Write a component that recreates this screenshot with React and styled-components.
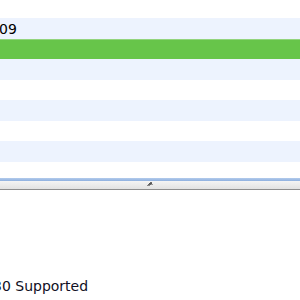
import React from 'react';
import styled, { createGlobalStyle } from 'styled-components';

// --- Colours ---
const STRIPE = '#edf3fe';
const SELECTED = '#67c54a';
const SELECTED_EDGE = '#93d47d';
const TEXT = '#000000';

const GlobalStyle = createGlobalStyle`
  html, body {
    margin: 0;
    padding: 0;
    background: #ffffff;
  }
  body {
    font-family: "DejaVu Sans", "Liberation Sans", sans-serif;
    overflow: hidden;
  }
`;

const Page = styled.div`
  width: 300px;
  height: 300px;
  display: flex;
  flex-direction: column;
  overflow: hidden;
`;

const Table = styled.div`
  padding-top: 18px;
  display: flex;
  flex-direction: column;
  height: 160px;
  overflow: hidden;
`;

const Row = styled.div`
  height: ${p => (p.$selected ? '19.5px' : '20.5px')};
  flex: none;
  display: flex;
  align-items: center;
  background: ${p => (p.$selected ? SELECTED : p.$striped ? STRIPE : '#ffffff')};
  border-top: ${p => (p.$selected ? `1px solid ${SELECTED_EDGE}` : 'none')};
  font-size: 14px;
  color: ${TEXT};
  overflow: hidden;
  white-space: nowrap;
`;

const Cell = styled.span`
  text-indent: -1px;
  padding-top: 2px;
`;

const Splitter = styled.div`
  flex: none;
  height: 12px;
  display: flex;
  flex-direction: column;
`;

const SplitterEdge = styled.div`
  height: 3px;
  background: linear-gradient(#b3cbec, #8eb0df);
`;

const SplitterBody = styled.div`
  height: 8px;
  background: linear-gradient(#f4f4f4, #e2e2e2);
  border-bottom: 1px solid #8e8e8e;
  display: flex;
  justify-content: center;
  align-items: center;
`;

const Status = styled.div`
  margin-top: auto;
  height: 22px;
  font-size: 14px;
  color: #101024;
  text-indent: -7px;
  white-space: nowrap;
  overflow: hidden;
`;

const Grip = () => (
  <svg width="7" height="6" viewBox="0 0 7 6">
    <rect x="3" y="0" width="2" height="1" fill="#6a6a6a" />
    <rect x="2" y="1" width="3" height="1" fill="#555" />
    <rect x="1" y="2" width="3" height="1" fill="#666" />
    <rect x="0" y="3" width="3" height="1" fill="#888" />
    <rect x="4" y="2" width="2" height="1" fill="#999" />
  </svg>
);

const rows = [
  { text: '09', striped: true },
  { text: '', selected: true },
  { text: '', striped: true },
  { text: '' },
  { text: '', striped: true },
  { text: '' },
  { text: '', striped: true },
  { text: '' },
];

const App = () => (
  <Page>
    <GlobalStyle />
    <Table>
      {rows.map((r, i) => (
        <Row key={i} $striped={r.striped} $selected={r.selected}>
          <Cell>{r.text}</Cell>
        </Row>
      ))}
    </Table>
    <Splitter>
      <SplitterEdge />
      <SplitterBody>
        <Grip />
      </SplitterBody>
    </Splitter>
    <Status>30 Supported</Status>
  </Page>
);

export default App;
